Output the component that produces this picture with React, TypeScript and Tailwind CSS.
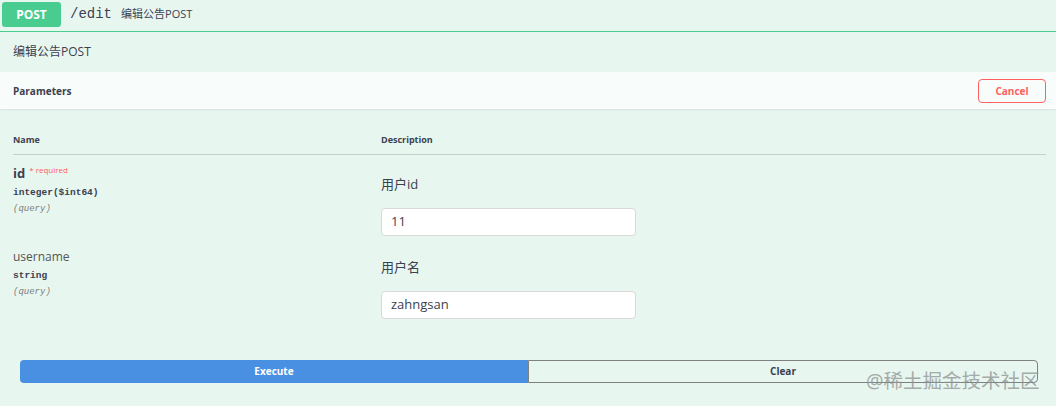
import React from "react";

const mono = "font-['Liberation_Mono','DejaVu_Sans_Mono',monospace]";

export default function App() {
  return (
    <div className="relative w-[1056px] h-[406px] overflow-hidden bg-[#e8f6f0] font-['Open_Sans','Noto_Sans_CJK_SC',sans-serif] text-[#3b4151]">
      {/* summary header */}
      <div className="flex items-start h-[32px] pt-[2px] pl-[2px] border-b border-[#49cc90]">
        <div className="w-[59px] h-[25px] rounded-[3px] bg-[#49cc90] text-white text-[12px] font-bold flex items-center justify-center">
          POST
        </div>
        <div className="flex items-center h-[25px] ml-[9px]">
          <span className={`${mono} text-[14px] text-[#3b4151]`}>/edit</span>
          <span className="ml-[9px] text-[11px] text-[#3b4151]">编辑公告POST</span>
        </div>
      </div>

      {/* description */}
      <div className="pt-[12px] pl-[13px] h-[40px]">
        <div className="text-[12px] leading-[16px]">编辑公告POST</div>
      </div>

      {/* parameters header */}
      <div className="flex items-center justify-between h-[37px] bg-[#f8fcfa] pl-[13px] pr-[10px] shadow-[0_1px_2px_rgba(0,0,0,0.08)]">
        <div className="text-[10px] font-bold pt-[2px]">Parameters</div>
        <button className="w-[68px] h-[24px] rounded-[4px] border-[1.5px] border-[#ff6060] text-[#ff6060] text-[10px] font-bold bg-transparent pt-[1px]">
          Cancel
        </button>
      </div>

      {/* table */}
      <div className="px-[13px] pr-[10px]">
        <div className="flex h-[46px] pt-[24px] border-b border-[#c7cfcb]">
          <div className="w-[368px] text-[9px] font-bold leading-[14px]">Name</div>
          <div className="text-[9px] font-bold leading-[14px]">Description</div>
        </div>

        {/* row 1 */}
        <div className="flex h-[89px]">
          <div className="w-[368px] pt-[9px]">
            <div className="flex items-start">
              <span className="text-[13px] font-bold leading-[18px]">id</span>
              <span className="ml-[4px] mt-[0px] text-[8px] text-[#ff6060] leading-[12px]">* required</span>
            </div>
            <div className={`${mono} text-[9.5px] font-bold leading-[14px] mt-[4px]`}>integer($int64)</div>
            <div className={`${mono} text-[9px] italic text-[#808080] leading-[14px] mt-[2px]`}>(query)</div>
          </div>
          <div className="pt-[20px]">
            <div className="text-[13px] leading-[18px]">用户id</div>
            <div className="mt-[15px] w-[255px] h-[28px] rounded-[4px] border border-[#d9d9d9] bg-white flex items-center pl-[9px] text-[13px]">
              11
            </div>
          </div>
        </div>

        {/* row 2 */}
        <div className="flex h-[116px]">
          <div className="w-[368px] pt-[4px]">
            <div className="text-[12px] leading-[18px] text-[#555]">username</div>
            <div className={`${mono} text-[9.5px] font-bold leading-[14px] mt-[3px]`}>string</div>
            <div className={`${mono} text-[9px] italic text-[#808080] leading-[14px] mt-[2px]`}>(query)</div>
          </div>
          <div className="pt-[14px]">
            <div className="text-[13px] leading-[18px]">用户名</div>
            <div className="mt-[15px] w-[255px] h-[28px] rounded-[4px] border border-[#d9d9d9] bg-white flex items-center pl-[9px] text-[13px]">
              zahngsan
            </div>
          </div>
        </div>
      </div>

      {/* execute / clear */}
      <div className="flex ml-[20px] w-[1018px] h-[23px]">
        <button className="flex-1 h-full rounded-l-[4px] bg-[#4990e2] text-white text-[10px] font-bold">
          Execute
        </button>
        <button className="flex-1 h-full rounded-r-[4px] border border-[#7d8181] bg-transparent text-[#3b4151] text-[10px] font-bold">
          Clear
        </button>
      </div>

      {/* watermark */}
      <div className="absolute left-[866px] top-[368px] text-[19.5px] leading-[26px] text-[#8d9290] opacity-75">
        @稀土掘金技术社区
      </div>
    </div>
  );
}
